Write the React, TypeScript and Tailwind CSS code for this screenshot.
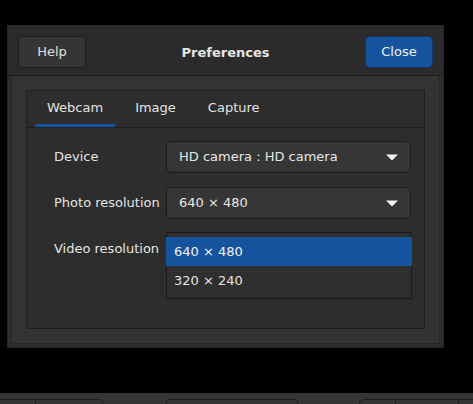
const font = { fontFamily: '"DejaVu Sans", "Liberation Sans", sans-serif' };

function Arrow() {
  return (
    <svg width="12" height="7" viewBox="0 0 12 7" className="shrink-0">
      <path d="M0 0.5 L12 0.5 L6 6.5 Z" fill="#f2f2f2" />
    </svg>
  );
}

function Combo({ value }: { value: string }) {
  return (
    <div className="flex h-[32px] items-center justify-between rounded-[5px] border border-[#1c1c1c] bg-[#363636] pl-3 pr-3 shadow-[inset_0_-1px_0_#2e2e2e]">
      <span className="text-[#e8e8e8]">{value}</span>
      <Arrow />
    </div>
  );
}

export default function App() {
  const tabs = ["Webcam", "Image", "Capture"];

  return (
    <div className="flex h-[404px] w-full flex-col overflow-hidden bg-black text-[13px]" style={font}>
      {/* dialog */}
      <div className="pl-[7px] pt-[25px]">
        <div className="flex h-[323px] w-[437px] flex-col border border-[#252525] bg-[#2f2f2f]">
          {/* header bar */}
          <div className="flex h-[50px] shrink-0 items-start justify-between border-b border-[#1e1e1e] bg-[#2b2b2b] px-[10px] pt-[10px]">
            <button className="h-[32px] w-[68px] rounded-[5px] border border-[#1b1b1b] bg-[#353535] text-[#e0e0e0]">
              Help
            </button>
            <div className="mt-[7px] font-bold text-[#e6e6e6]">Preferences</div>
            <button className="h-[32px] w-[68px] rounded-[5px] border border-[#10386b] bg-[#15539e] text-[#f0f0f0]">
              Close
            </button>
          </div>

          {/* body */}
          <div className="mx-[3px] mb-[3px] flex-1 border border-t-0 border-[#262626] bg-[#333333] px-[14px] pb-[14px] pt-[14px]">
            <div className="flex h-full flex-col border border-[#1f1f1f] bg-[#2d2d2d]">
              {/* tabs */}
              <div className="flex h-[37px] shrink-0 gap-2 border-b border-[#1f1f1f] px-2">
                {tabs.map((t, i) => (
                  <div
                    key={t}
                    className={`flex items-center px-3 pt-px text-[#e4e4e4] ${i === 0 ? "border-b-[3px] border-[#15539e]" : "border-b-[3px] border-transparent"}`}
                  >
                    {t}
                  </div>
                ))}
              </div>

              {/* form */}
              <div className="grid grid-cols-[106px_245px] items-center gap-x-[6px] gap-y-[14px] pl-[27px] pt-[13px]">
                <span className="whitespace-nowrap text-[#e4e4e4]">Device</span>
                <Combo value="HD camera : HD camera" />

                <span className="whitespace-nowrap text-[#e4e4e4]">Photo resolution</span>
                <Combo value="640 × 480" />

                <span className="whitespace-nowrap text-[#e4e4e4]">Video resolution</span>
                <div className="relative h-[32px]">
                  <div className="absolute -top-px left-0 -right-px border border-[#1b1b1b] bg-[#2f2f2f] pb-[3px] pt-[4px]">
                    <div className="-mx-px flex h-[29px] items-center bg-[#15539e] pl-[8px] text-[#f2f2f2]">640 × 480</div>
                    <div className="flex h-[29px] items-center pl-[7px] text-[#e4e4e4]">320 × 240</div>
                  </div>
                </div>
              </div>
            </div>
          </div>
        </div>
      </div>

      <div className="flex-1" />

      {/* window behind: toolbar edge */}
      <div className="relative h-[11px] shrink-0 bg-[#353535]">
        <div className="absolute left-[-10px] top-[6px] h-[10px] w-[46px] border border-[#1f1f1f]" />
        <div className="absolute left-[36px] top-[6px] h-[10px] w-[68px] rounded-tr-[5px] border border-l-0 border-[#1f1f1f]" />
        <div className="absolute left-[165px] top-[6px] h-[10px] w-[134px] rounded-t-[5px] border border-[#1f1f1f]" />
        <div className="absolute left-[359px] top-[6px] h-[10px] w-[37px] rounded-tl-[5px] border border-[#1f1f1f]" />
        <div className="absolute left-[395px] top-[6px] h-[10px] w-[64px] border border-[#1f1f1f]" />
        <div className="absolute left-[458px] top-[6px] h-[10px] w-[30px] border border-[#1f1f1f]" />
      </div>
    </div>
  );
}
